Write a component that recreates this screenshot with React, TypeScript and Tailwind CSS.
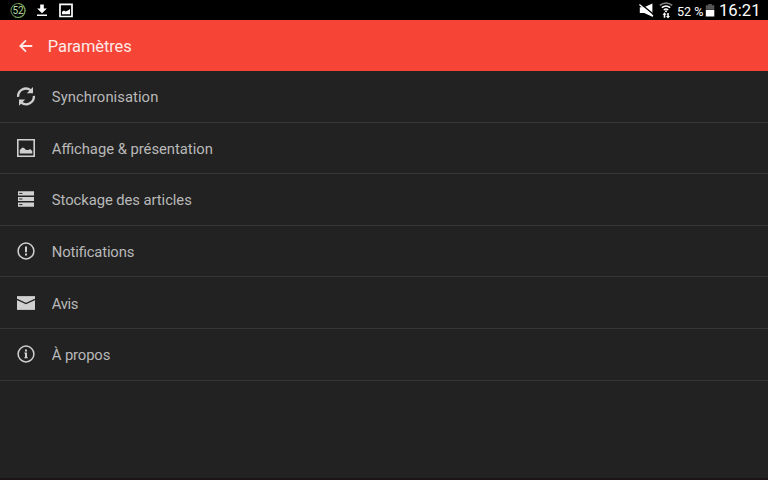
import type { ReactNode } from "react";

type SettingsItem = {
  label: string;
  width: string;
  icon: ReactNode;
};

const items: SettingsItem[] = [
  {
    label: "Synchronisation",
    width: "106.5",
    icon: (
      <>
        <g fill="none" stroke="currentColor" strokeWidth="2.3">
          <path d="M2.1 10.9A7.9 7.9 0 0 1 14.6 4.1" />
          <path d="M17.9 9.9A7.9 7.9 0 0 1 5.4 16.7" />
        </g>
        <path d="M17 1v6.2H10.8z" />
        <path d="M3 19.8v-6.2h6.2z" />
      </>
    ),
  },
  {
    label: "Affichage & présentation",
    width: "161",
    icon: (
      <>
        <path d="M1.8 1.8h16.4v16.4H1.8z" fill="none" stroke="currentColor" strokeWidth="1.6" />
        <path d="M3.8 15.6v-3.7l2.6-2.3 1.6.3 2.2 2.1 2.1.1 1.9-1 2.1 2.2v2.3z" />
      </>
    ),
  },
  {
    label: "Stockage des articles",
    width: "140",
    icon: (
      <>
        <path d="M2 2.3h16v4.1H2zM2 8h16v4H2zM2 13.6h16v4.1H2z" />
        <path d="M3.2 4.4h3.2M3.2 10h3.2M3.2 15.6h3.2" stroke="#222222" strokeWidth="1" />
      </>
    ),
  },
  {
    label: "Notifications",
    width: "82.5",
    icon: (
      <>
        <circle cx="10" cy="10" r="7.9" fill="none" stroke="currentColor" strokeWidth="1.5" />
        <path d="M9 5.4h2v5.8H9zM9 12.4h2v2H9z" />
      </>
    ),
  },
  {
    label: "Avis",
    width: "26.5",
    icon: (
      <>
        <path d="M1 3.1h18v13.8H1z" />
        <path d="M1 6.3l9 4.3 9-4.3" fill="none" stroke="#222222" strokeWidth="1.3" />
      </>
    ),
  },
  {
    label: "À propos",
    width: "58.5",
    icon: (
      <>
        <circle cx="10" cy="10" r="7.9" fill="none" stroke="currentColor" strokeWidth="1.5" />
        <path d="M9 5.4h2v2H9zM8.3 8.4H11v4.9h.8v1H8.3v-1H9V9.4h-.7z" />
      </>
    ),
  },
];

// SVG text keeps the label widths stable across hinting settings
function Label({ text, width }: { text: string; width: string }) {
  return (
    <svg width="220" height="24" viewBox="0 0 220 24" fill="currentColor">
      <text x="-0.2" y="17.6" textLength={width} lengthAdjust="spacing">
        {text}
      </text>
    </svg>
  );
}

function StatusBar() {
  return (
    <div className="flex h-5 items-center justify-between bg-black pr-1 pl-2.5 text-white">
      <div className="flex items-center">
        <svg width="16" height="18" viewBox="0 0 16 18">
          <circle cx="8" cy="9.5" r="7" fill="none" stroke="#587a47" strokeWidth="1.2" />
          <path d="M8 2.5A7 7 0 1 1 5 15.8" fill="none" stroke="#79a65e" strokeWidth="1.2" strokeDasharray="2 0.6" />
          <text x="8" y="13.3" fontSize="10" textAnchor="middle" fill="#b9dfa2">52</text>
        </svg>
        <svg className="ml-2.5" width="12" height="14" viewBox="0 0 12 14" fill="currentColor">
          <path d="M4.2 1.5h3.6v3.9h3.1L6 10.2 1.1 5.4h3.1zM1 11.4h10v1.7H1z" />
        </svg>
        <svg className="ml-2.5" width="16" height="16" viewBox="0 0 16 16" fill="currentColor">
          <path d="M2 2.3h12v12.2H2z" fill="none" stroke="currentColor" strokeWidth="1.7" />
          <path d="M4 12.3V9.8l2-1.2 1.5 1L10 8.4 12 7v5.3z" />
        </svg>
      </div>
      <div className="flex items-center">
        <svg width="16" height="16" viewBox="0 0 16 16" fill="currentColor">
          <path d="M.8 5.3h4.4L13.4 1.4v13.4L5.2 11H.8z" />
          <path d="M1.2 1.4l13.8 11.4" stroke="#000" strokeWidth="1.4" />
          <path d="M.4 2.6l13.6 11.6" stroke="currentColor" strokeWidth="1.3" />
        </svg>
        <svg className="ml-1" width="14" height="18" viewBox="0 0 14 18" fill="currentColor">
          <g fill="none" stroke="currentColor" strokeWidth="1.5">
            <path d="M.8 4.3Q7-.4 13.2 4.3" stroke="#888" />
            <path d="M2.8 6.7Q7 3.2 11.2 6.7" />
            <path d="M4.8 9Q7 7.2 9.2 9" />
          </g>
          <circle cx="7" cy="10.3" r="1" />
          <path d="M5.5 11.3l2 2.4H6.3v3H4.7v-3H3.5zM9 17.5l-2-2.4h1.2v-3h1.6v3H11z" />
        </svg>
        <svg className="ml-1" width="28" height="18" viewBox="0 0 28 18" fill="currentColor">
          <text x="0" y="14.6" fontSize="12.5" textLength="26.5" lengthAdjust="spacingAndGlyphs">52 %</text>
        </svg>
        <svg width="10" height="14" viewBox="0 0 10 14" fill="currentColor">
          <path d="M3.3 1h3.5v1.2h2.5v4.6H.8V2.2h2.5z" fill="#555" />
          <path d="M.8 7h8.5v6.5H.8z" />
        </svg>
        <svg className="ml-1" width="45" height="20" viewBox="0 0 45 20" fill="currentColor">
          <text x="0" y="16.1" fontSize="17.4" textLength="41.5" lengthAdjust="spacingAndGlyphs">16:21</text>
        </svg>
      </div>
    </div>
  );
}

export default function App() {
  return (
    <div className="flex h-[480px] w-[768px] flex-col overflow-hidden bg-[#222222] font-['Roboto',sans-serif]">
      <StatusBar />
      <header className="flex h-[51px] shrink-0 items-center bg-[#f64437] pl-4 text-[16.5px] text-[#ffe9e6]">
        <svg className="mr-3" width="20" height="20" viewBox="0 0 20 20" fill="none" stroke="currentColor" strokeWidth="1.8">
          <path d="M16.3 10H4.4M10 4.3L4.3 10l5.7 5.7" />
        </svg>
        <Label text="Paramètres" width="84" />
      </header>
      <ul className="flex-1 text-[14.8px] text-[#b9b9b9]">
        {items.map((item) => (
          <li key={item.label} className="flex h-[51.6px] items-center border-b border-[#363636] pl-4">
            <svg className="mr-4 text-[#d0d0d0]" width="20" height="20" viewBox="0 0 20 20" fill="currentColor">
              {item.icon}
            </svg>
            <Label text={item.label} width={item.width} />
          </li>
        ))}
      </ul>
      <div className="h-0.5 bg-[#1c1418]" />
    </div>
  );
}
